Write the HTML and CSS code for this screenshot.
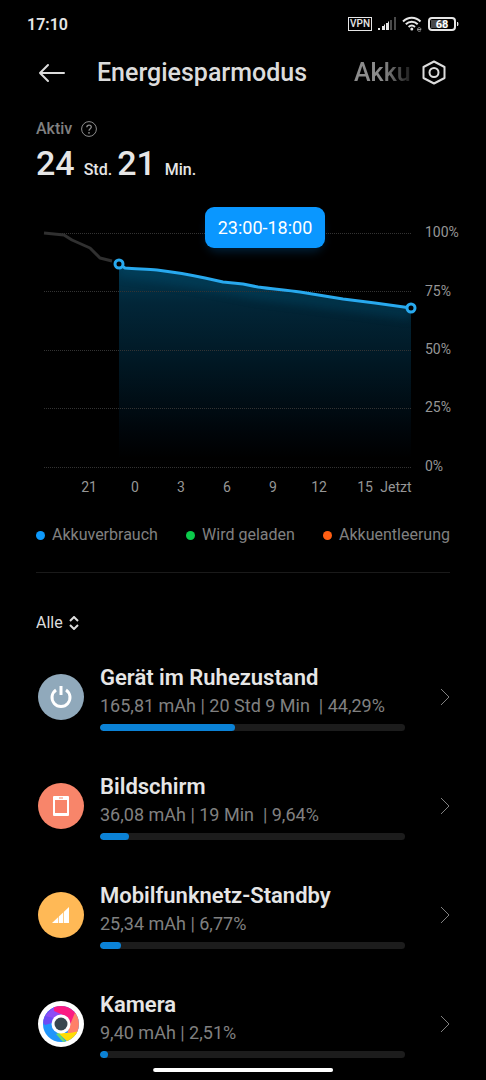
FILE: index.html
```html
<!DOCTYPE html>
<html lang="de">
  <head>
    <meta charset="utf-8" />
    <meta name="viewport" content="width=device-width, initial-scale=1" />
    <title>Energiesparmodus</title>
    <link rel="stylesheet" href="styles.css">
  </head>
  <body>
    <div class="status-bar">
      <span class="clock">17:10</span>
      <div class="status-icons">
        <span class="vpn">VPN</span>
        <svg width="18" height="14" viewBox="0 0 18 14">
          <path d="M0 11h2v2H0zM4 9h2v4H4zM8 6h2v7H8z" fill="#e6e6e6" />
          <path d="M6 7.500h1V13H6zM10 4.500h1V13h-1z" fill="#e6e6e6" />
          <path d="M12 3h2v10h-2zM16 0h2v13h-2z" fill="#4a4a4a" />
        </svg>
        <svg width="20" height="16" viewBox="0 0 20 16" fill="none" stroke="#e6e6e6" stroke-width="2">
          <path d="M1 5.500C6 .4 13.500 .4 18.500 5.500M3.800 8.300c3.400-3.300 8.500-3.300 11.900 0M6.600 11c1.900-1.700 4.500-1.700 6.400 0" />
          <circle cx="9.800" cy="13" r="1.500" fill="#e6e6e6" stroke="none" />
          <path d="M15.500 13.500h3.500c0-2.500-3.500-2.500-3.500 0s2.500 2 3.500 1" stroke="#999" stroke-width="1" />
        </svg>
        <svg width="31" height="14" viewBox="0 0 31 14">
          <rect x="1" y="1" width="26" height="12" rx="3" fill="none" stroke="#e6e6e6" stroke-width="2" />
          <rect x="3" y="3" width="15" height="8" fill="#4a4a4a" />
          <path d="M29 5h1q1 2 0 4h-1z" fill="#e6e6e6" />
          <text class="battery-text" x="14" y="11" text-anchor="middle">68</text>
        </svg>
      </div>
    </div>

    <header class="header">
      <button class="icon-button" type="button" aria-label="Zurück">
        <svg width="28" height="20" viewBox="0 0 28 20" fill="none" stroke="#dcdcdc" stroke-width="2" stroke-linecap="round" stroke-linejoin="round">
          <path d="M26 10H2M10 2L2 10l8 8" />
        </svg>
      </button>
      <nav class="tabs">
        <a class="tab" href="#energie">Energiesparmodus</a>
        <a class="tab tab-next" href="#akku">Akku</a>
      </nav>
      <button class="icon-button" type="button" aria-label="Einstellungen">
        <svg width="24" height="26" viewBox="0 0 24 26" fill="none" stroke="#dcdcdc" stroke-width="2" stroke-linejoin="round">
          <path d="M12 1.500L22.500 7v11L12 23.500 1.500 18V7z" />
          <circle cx="12" cy="12.500" r="4.500" />
        </svg>
      </button>
    </header>

    <main class="content" id="energie">
      <div class="active-label">
        <span>Aktiv</span>
        <button class="icon-button" type="button" aria-label="Hilfe">
          <svg width="16" height="16" viewBox="0 0 16 16" fill="none" stroke="#8c8c8c">
            <circle cx="8" cy="8" r="7.400" />
            <path d="M5.800 6.300c.1-3 4.500-2.800 4.500-.2C10.300 7.700 8 7.800 8 9.700" stroke-width="1.300" />
            <circle cx="8" cy="11.800" r=".9" fill="#8c8c8c" stroke="none" />
          </svg>
        </button>
      </div>
      <p class="duration">
        <span class="number">24</span>
        <span class="unit">Std.</span>
        <span class="number">21</span>
        <span class="unit">Min.</span>
      </p>

      <svg class="chart" viewBox="0 0 414 304" role="img" aria-label="Akkustand">
        <defs>
          <linearGradient id="area" x1="0" y1="64" x2="0" y2="258" gradientUnits="userSpaceOnUse">
            <stop offset="0" stop-color="#023a54" />
            <stop offset=".2" stop-color="#022638" />
            <stop offset=".5" stop-color="#011824" />
            <stop offset=".85" stop-color="#00060b" />
            <stop offset="1" stop-color="#000" />
          </linearGradient>
          <clipPath id="area-clip">
            <path d="M83 64L89 68 121 70 169 78 187 83 207 85 222 88 264 92 307 99 339 103 375 108V267H83z" />
          </clipPath>
          <filter id="glow" x="-20%" y="-60%" width="140%" height="220%">
            <feGaussianBlur stdDeviation="5" />
          </filter>
        </defs>

        <g clip-path="url(#area-clip)">
          <path d="M83 60H375V267H83z" fill="url(#area)" />
          <path d="M83 70L121 75 169 83 222 93 307 104 375 113" fill="none" stroke="#06506f" stroke-width="12" opacity=".35" filter="url(#glow)" />
        </g>

        <g class="grid">
          <path d="M8 33.500H376M8 91.500H376M8 150.500H376M8 208.500H376M8 267.500H376" />
        </g>

        <path class="line line-past" d="M8 33L28 35 36 40 54 48 64 58 76 61" />
        <path class="line line-active" d="M83 64L89 68 C100 69 111 69 121 70 137 72 155 75 169 78L187 82 207 84 222 87C236 89 250 90 264 92L307 99 339 103 375 108" />
        <circle class="handle" cx="83" cy="64" r="4" />
        <circle class="handle" cx="375" cy="108" r="4" />

        <rect x="171" y="16" width="116" height="36" rx="10" fill="#0078d0" opacity=".25" filter="url(#glow)" />
        <rect x="169" y="7" width="120" height="41" rx="9" fill="#0a97ff" />
        <text class="tooltip-text" x="229" y="34" text-anchor="middle">23:00-18:00</text>

        <g class="axis">
          <text x="389" y="37">100%</text>
          <text x="389" y="96">75%</text>
          <text x="389" y="154">50%</text>
          <text x="389" y="212">25%</text>
          <text x="389" y="271">0%</text>
        </g>
        <g class="axis" text-anchor="middle">
          <text x="53" y="292">21</text>
          <text x="99" y="292">0</text>
          <text x="145" y="292">3</text>
          <text x="191" y="292">6</text>
          <text x="237" y="292">9</text>
          <text x="283" y="292">12</text>
          <text x="329" y="292">15</text>
          <text x="360" y="292">Jetzt</text>
        </g>
      </svg>

      <ul class="legend">
        <li class="usage">Akkuverbrauch</li>
        <li class="charging">Wird geladen</li>
        <li class="drain">Akkuentleerung</li>
      </ul>

      <div class="filter">
        <select aria-label="Filter">
          <option>Alle</option>
        </select>
        <svg width="10" height="14" viewBox="0 0 10 14" fill="none" stroke="#dcdcdc" stroke-width="2">
          <path d="M1 5l4-4 4 4M1 9l4 4 4-4" />
        </svg>
      </div>

      <ul class="apps">
        <li>
          <a class="app" href="#ruhezustand">
            <svg class="app-icon" viewBox="0 0 46 46">
              <circle cx="23" cy="23" r="23" fill="#90a9bb" />
              <path d="M18 16a9 9 0 1 0 10 0" fill="none" stroke="#fff" stroke-width="3" />
              <path d="M23 12v9" stroke="#fff" stroke-width="3" />
            </svg>
            <div class="app-info">
              <h2>Gerät im Ruhezustand</h2>
              <p>165,81 mAh | 20 Std 9 Min&nbsp; | 44,29%</p>
              <progress value="44.29" max="100" aria-label="Verbrauch Gerät im Ruhezustand"></progress>
            </div>
            <svg class="chevron" viewBox="0 0 10 18"><path d="M1 1l8 8-8 8" /></svg>
          </a>
        </li>
        <li>
          <a class="app" href="#bildschirm">
            <svg class="app-icon" viewBox="0 0 46 46">
              <circle cx="23" cy="23" r="23" fill="#f8856a" />
              <path d="M16 13h14q1 0 1 1v18q0 1-1 1H16q-1 0-1-1V14q0-1 1-1zM17 17v13h12V17z" fill="#fff" fill-rule="evenodd" />
              <path d="M21 15h4" stroke="#f8856a" />
            </svg>
            <div class="app-info">
              <h2>Bildschirm</h2>
              <p>36,08 mAh | 19 Min&nbsp; | 9,64%</p>
              <progress value="9.64" max="100" aria-label="Verbrauch Bildschirm"></progress>
            </div>
            <svg class="chevron" viewBox="0 0 10 18"><path d="M1 1l8 8-8 8" /></svg>
          </a>
        </li>
        <li>
          <a class="app" href="#mobilfunknetz">
            <svg class="app-icon" viewBox="0 0 46 46">
              <circle cx="23" cy="23" r="23" fill="#ffb956" />
              <path d="M14 31L31 15v16z" fill="#fff" />
              <path d="M20.500 22v10M25.500 17v15" stroke="#ffb956" stroke-width=".7" />
            </svg>
            <div class="app-info">
              <h2>Mobilfunknetz-Standby</h2>
              <p>25,34 mAh | 6,77%</p>
              <progress value="6.77" max="100" aria-label="Verbrauch Mobilfunknetz-Standby"></progress>
            </div>
            <svg class="chevron" viewBox="0 0 10 18"><path d="M1 1l8 8-8 8" /></svg>
          </a>
        </li>
        <li>
          <a class="app" href="#kamera">
            <svg class="app-icon" viewBox="0 0 46 46">
              <defs>
                <clipPath id="lens"><circle cx="23" cy="23" r="18" /></clipPath>
              </defs>
              <circle cx="23" cy="23" r="23" fill="#fff" />
              <g clip-path="url(#lens)">
                <path d="M5 5h36v36H5z" fill="#2196fb" />
                <path d="M5 22L5 5h12l4 9-7 8-7 2z" fill="#6d4bf4" />
                <path d="M7 15L17 5l8 9-9 3z" fill="#8e4df5" />
                <path d="M16 4h20l3 7-7 13-5-9-11-5z" fill="#fb1b83" />
                <path d="M38 9l6 13-5 12-10-1 3-9z" fill="#ff8069" />
                <path d="M43 30L32 43 20 32h12z" fill="#ffdc05" />
                <path d="M18 33l8 9 2-1-7-9z" fill="#6ddc68" />
              </g>
              <circle cx="23" cy="23" r="9.500" fill="#fff" />
              <circle cx="23" cy="23" r="6.500" fill="#37474f" />
            </svg>
            <div class="app-info">
              <h2>Kamera</h2>
              <p>9,40 mAh | 2,51%</p>
              <progress value="2.51" max="100" aria-label="Verbrauch Kamera"></progress>
            </div>
            <svg class="chevron" viewBox="0 0 10 18"><path d="M1 1l8 8-8 8" /></svg>
          </a>
        </li>
      </ul>
    </main>

    <div class="home-indicator"></div>
  </body>
</html>
```
FILE: styles.css
```css
* {
  box-sizing: border-box;
}

body,
h2,
p,
ul {
  margin: 0;
  padding: 0;
}

body {
  background: #000;
  color: #e6e6e6;
  font-family: Roboto, "Liberation Sans", sans-serif;
}

ul {
  list-style: none;
}

a {
  color: inherit;
  text-decoration: none;
}

svg {
  display: block;
  flex-shrink: 0;
}

.icon-button {
  display: flex;
  padding: 0;
  border: 0;
  background: none;
  cursor: pointer;
}

/* Status bar */
.status-bar {
  display: flex;
  align-items: center;
  justify-content: space-between;
  height: 48px;
  padding: 0 27px;
}

.clock {
  font-size: 16px;
  font-weight: 600;
}

.status-icons {
  display: flex;
  align-items: center;
  gap: 6px;
}

.vpn {
  border: 1px solid #e6e6e6;
  padding: 0 1px;
  font-size: 10px;
  font-weight: 500;
  line-height: 12px;
}

.battery-text {
  fill: #fff;
  font-size: 11px;
  font-weight: 700;
}

/* Header */
.header {
  display: flex;
  align-items: center;
  height: 50px;
  padding: 0 40px 0 38px;
}

.tabs {
  display: flex;
  flex: 1;
  gap: 47px;
  min-width: 0;
  margin: 0 12px 0 31px;
  overflow: hidden;
  white-space: nowrap;
}

.tab {
  color: #dcdcdc;
  font-size: 25px;
  font-weight: 500;
  line-height: 34px;
}

.tab-next {
  color: transparent;
  background: linear-gradient(90deg, #8c8c8c 50%, #1c1c1c);
  background-clip: text;
}

/* Chart */
.content {
  padding: 21px 36px 22px;
}

.active-label {
  display: flex;
  align-items: center;
  gap: 9px;
  color: #808080;
  font-size: 16px;
  font-weight: 500;
  line-height: 20px;
}

.duration {
  display: flex;
  align-items: baseline;
  line-height: 48px;
}

.number {
  font-size: 34px;
  font-weight: 500;
}

.unit {
  margin: 0 5px 0 9px;
  font-size: 16px;
  font-weight: 500;
}

.chart {
  width: 100%;
  margin-top: 6px;
  overflow: visible;
}

.grid {
  stroke: #333;
  stroke-dasharray: 1 1;
}

.line {
  fill: none;
  stroke-width: 3;
  stroke-linejoin: round;
}

.line-past {
  stroke: #303030;
}

.line-active {
  stroke: #28a9ee;
}

.handle {
  fill: #000;
  stroke: #28a9ee;
  stroke-width: 3;
}

.tooltip-text {
  fill: #fff;
  font-size: 18px;
}

.axis {
  fill: #969696;
  font-size: 14px;
}

.legend {
  display: flex;
  justify-content: space-between;
  padding: 20px 0 26px;
  border-bottom: 1px solid #1a1a1a;
  color: #808080;
  font-size: 16px;
  line-height: 22px;
}

.legend li {
  display: flex;
  align-items: center;
  gap: 7px;
}

.legend li::before {
  content: "";
  width: 9px;
  height: 9px;
  border-radius: 50%;
}

.usage::before {
  background: #0d99fb;
}

.charging::before {
  background: #0bcb4b;
}

.drain::before {
  background: #ff5e13;
}

/* App list */
.filter {
  display: flex;
  align-items: center;
  gap: 6px;
  margin: 39px 0 29px;
}

.filter select {
  appearance: none;
  padding: 0;
  border: 0;
  background: none;
  color: #dcdcdc;
  font-family: inherit;
  font-size: 16px;
  line-height: 22px;
}

.apps {
  display: grid;
  gap: 41px;
}

.app {
  display: flex;
  align-items: center;
  padding-left: 2px;
}

.app-icon {
  width: 46px;
  height: 46px;
}

.app-info {
  flex: 1;
  min-width: 0;
  margin: 0 35px 0 16px;
}

.app-info h2 {
  font-size: 22px;
  font-weight: 600;
  line-height: 30px;
}

.app-info p {
  color: #808080;
  font-size: 18px;
  line-height: 26px;
}

.app-info progress {
  appearance: none;
  display: block;
  width: 100%;
  height: 7px;
  margin-top: 5px;
  border: 0;
  border-radius: 4px;
  overflow: hidden;
}

.app-info progress::-webkit-progress-bar {
  background: #1c1c1c;
}

.app-info progress::-webkit-progress-value {
  border-radius: 4px;
  background: #0b82d6;
}

.chevron {
  width: 10px;
  height: 18px;
  fill: none;
  stroke: #808080;
}

.home-indicator {
  position: fixed;
  bottom: 8px;
  left: 50%;
  width: 37%;
  height: 4px;
  border-radius: 2px;
  background: #fff;
  transform: translateX(-50%);
}
```
